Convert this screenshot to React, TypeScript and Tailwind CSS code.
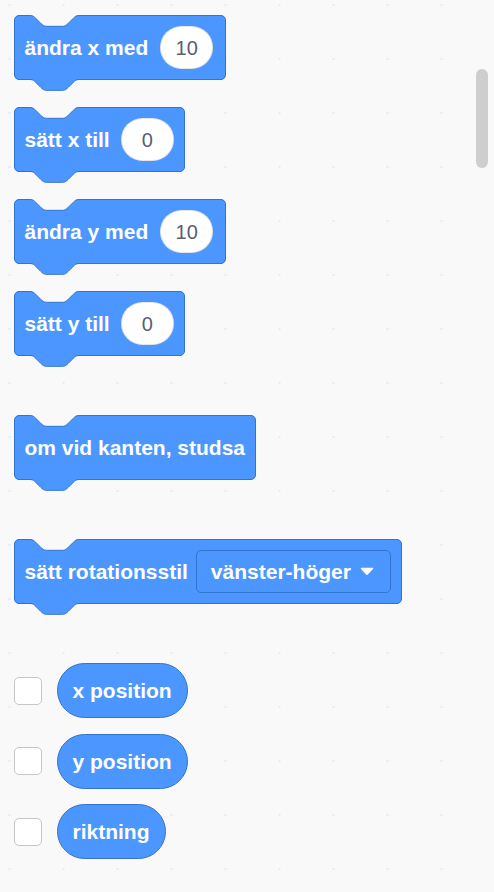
import React from 'react';

// Scratch notch, 36x8 units scaled by 1.35
const NOTCH =
  'c2.7,0 4.05,1.35 5.4,2.7 l5.4,5.4 c1.35,1.35 2.7,2.7 5.4,2.7 h16.2 c2.7,0 4.05,-1.35 5.4,-2.7 l5.4,-5.4 c1.35,-1.35 2.7,-2.7 5.4,-2.7';

function TopNotch() {
  return (
    <svg className="absolute left-[14px] top-[-2px]" width="52" height="14" viewBox="0 0 52 14">
      <path d={`M1.2,0.9 V1.5 ${NOTCH} V0.9 Z`} fill="#f9f9f9" />
      <path d={`M1.2,1.5 ${NOTCH}`} fill="none" stroke="#3373cc" strokeWidth="1" />
    </svg>
  );
}

function BottomNotch() {
  return (
    <svg className="absolute left-[14px] top-full" width="52" height="13" viewBox="0 0 52 13">
      <path d={`M1.2,0 V0.5 ${NOTCH} V0 Z`} fill="#4c97ff" />
      <path d={`M1.2,0.5 ${NOTCH}`} fill="none" stroke="#3373cc" strokeWidth="1" />
    </svg>
  );
}

function Block({ children, className = '' }: { children: React.ReactNode; className?: string }) {
  return (
    <div
      className={`relative flex h-[65px] w-fit items-center rounded-[5px] border border-[#3373cc] bg-[#4c97ff] pl-[10px] ${className}`}
    >
      <TopNotch />
      {children}
      <BottomNotch />
    </div>
  );
}

function Label({ children }: { children: React.ReactNode }) {
  return <span className="whitespace-nowrap text-[21px] font-bold leading-none text-white">{children}</span>;
}

function NumInput({ value }: { value: string }) {
  return (
    <div className="flex h-[43px] min-w-[53px] items-center justify-center rounded-full border border-black/10 bg-white px-[11px] text-[20px] leading-none text-[#575e75]">
      {value}
    </div>
  );
}

function Reporter({ label }: { label: string }) {
  return (
    <div className="flex items-center gap-[15px]">
      <div className="h-[28px] w-[28px] rounded-[5px] border-[1.5px] border-[#c6c6c6] bg-white" />
      <div className="flex h-[55px] items-center rounded-full border border-[#3373cc] bg-[#4c97ff] px-[15px]">
        <Label>{label}</Label>
      </div>
    </div>
  );
}

export default function App() {
  return (
    <div className="relative h-[892px] w-full overflow-hidden bg-[#f9f9f9] bg-[radial-gradient(circle,#ebebeb_1px,transparent_1.6px)] bg-[length:54px_54px] bg-[position:-17.5px_-22px] font-['Liberation_Sans',Arial,sans-serif]">
      <div className="flex flex-col pl-[13.5px] pt-[15px]">
        <Block className="gap-[12px] pr-[12px]">
          <Label>ändra x med</Label>
          <NumInput value="10" />
        </Block>
        <Block className="mt-[27px] gap-[11px] pr-[10px]">
          <Label>sätt x till</Label>
          <NumInput value="0" />
        </Block>
        <Block className="mt-[27px] gap-[12px] pr-[12px]">
          <Label>ändra y med</Label>
          <NumInput value="10" />
        </Block>
        <Block className="mt-[27px] gap-[11px] pr-[10px]">
          <Label>sätt y till</Label>
          <NumInput value="0" />
        </Block>

        <Block className="mt-[59px] pr-[10px]">
          <Label>om vid kanten, studsa</Label>
        </Block>

        <Block className="mt-[59px] gap-[8px] pr-[10px]">
          <Label>sätt rotationsstil</Label>
          <div className="flex h-[43px] items-center gap-[9px] rounded-[5px] border border-[#3373cc] bg-[#4c97ff] pl-[14px] pr-[16px]">
            <Label>vänster-höger</Label>
            <svg width="14" height="9" viewBox="0 0 14 9">
              <path
                d="M1.5,0.8 H12.5 Q13.8,0.8 13,1.9 L7.9,7.6 Q7,8.5 6.1,7.6 L1,1.9 Q0.2,0.8 1.5,0.8 Z"
                fill="#ffffff"
              />
            </svg>
          </div>
        </Block>

        <div className="mt-[59px] flex flex-col gap-[15.5px]">
          <Reporter label="x position" />
          <Reporter label="y position" />
          <Reporter label="riktning" />
        </div>
      </div>

      {/* scrollbar */}
      <div className="absolute right-[6px] top-[69px] h-[99px] w-[12px] rounded-full bg-[#cecece]" />
    </div>
  );
}
